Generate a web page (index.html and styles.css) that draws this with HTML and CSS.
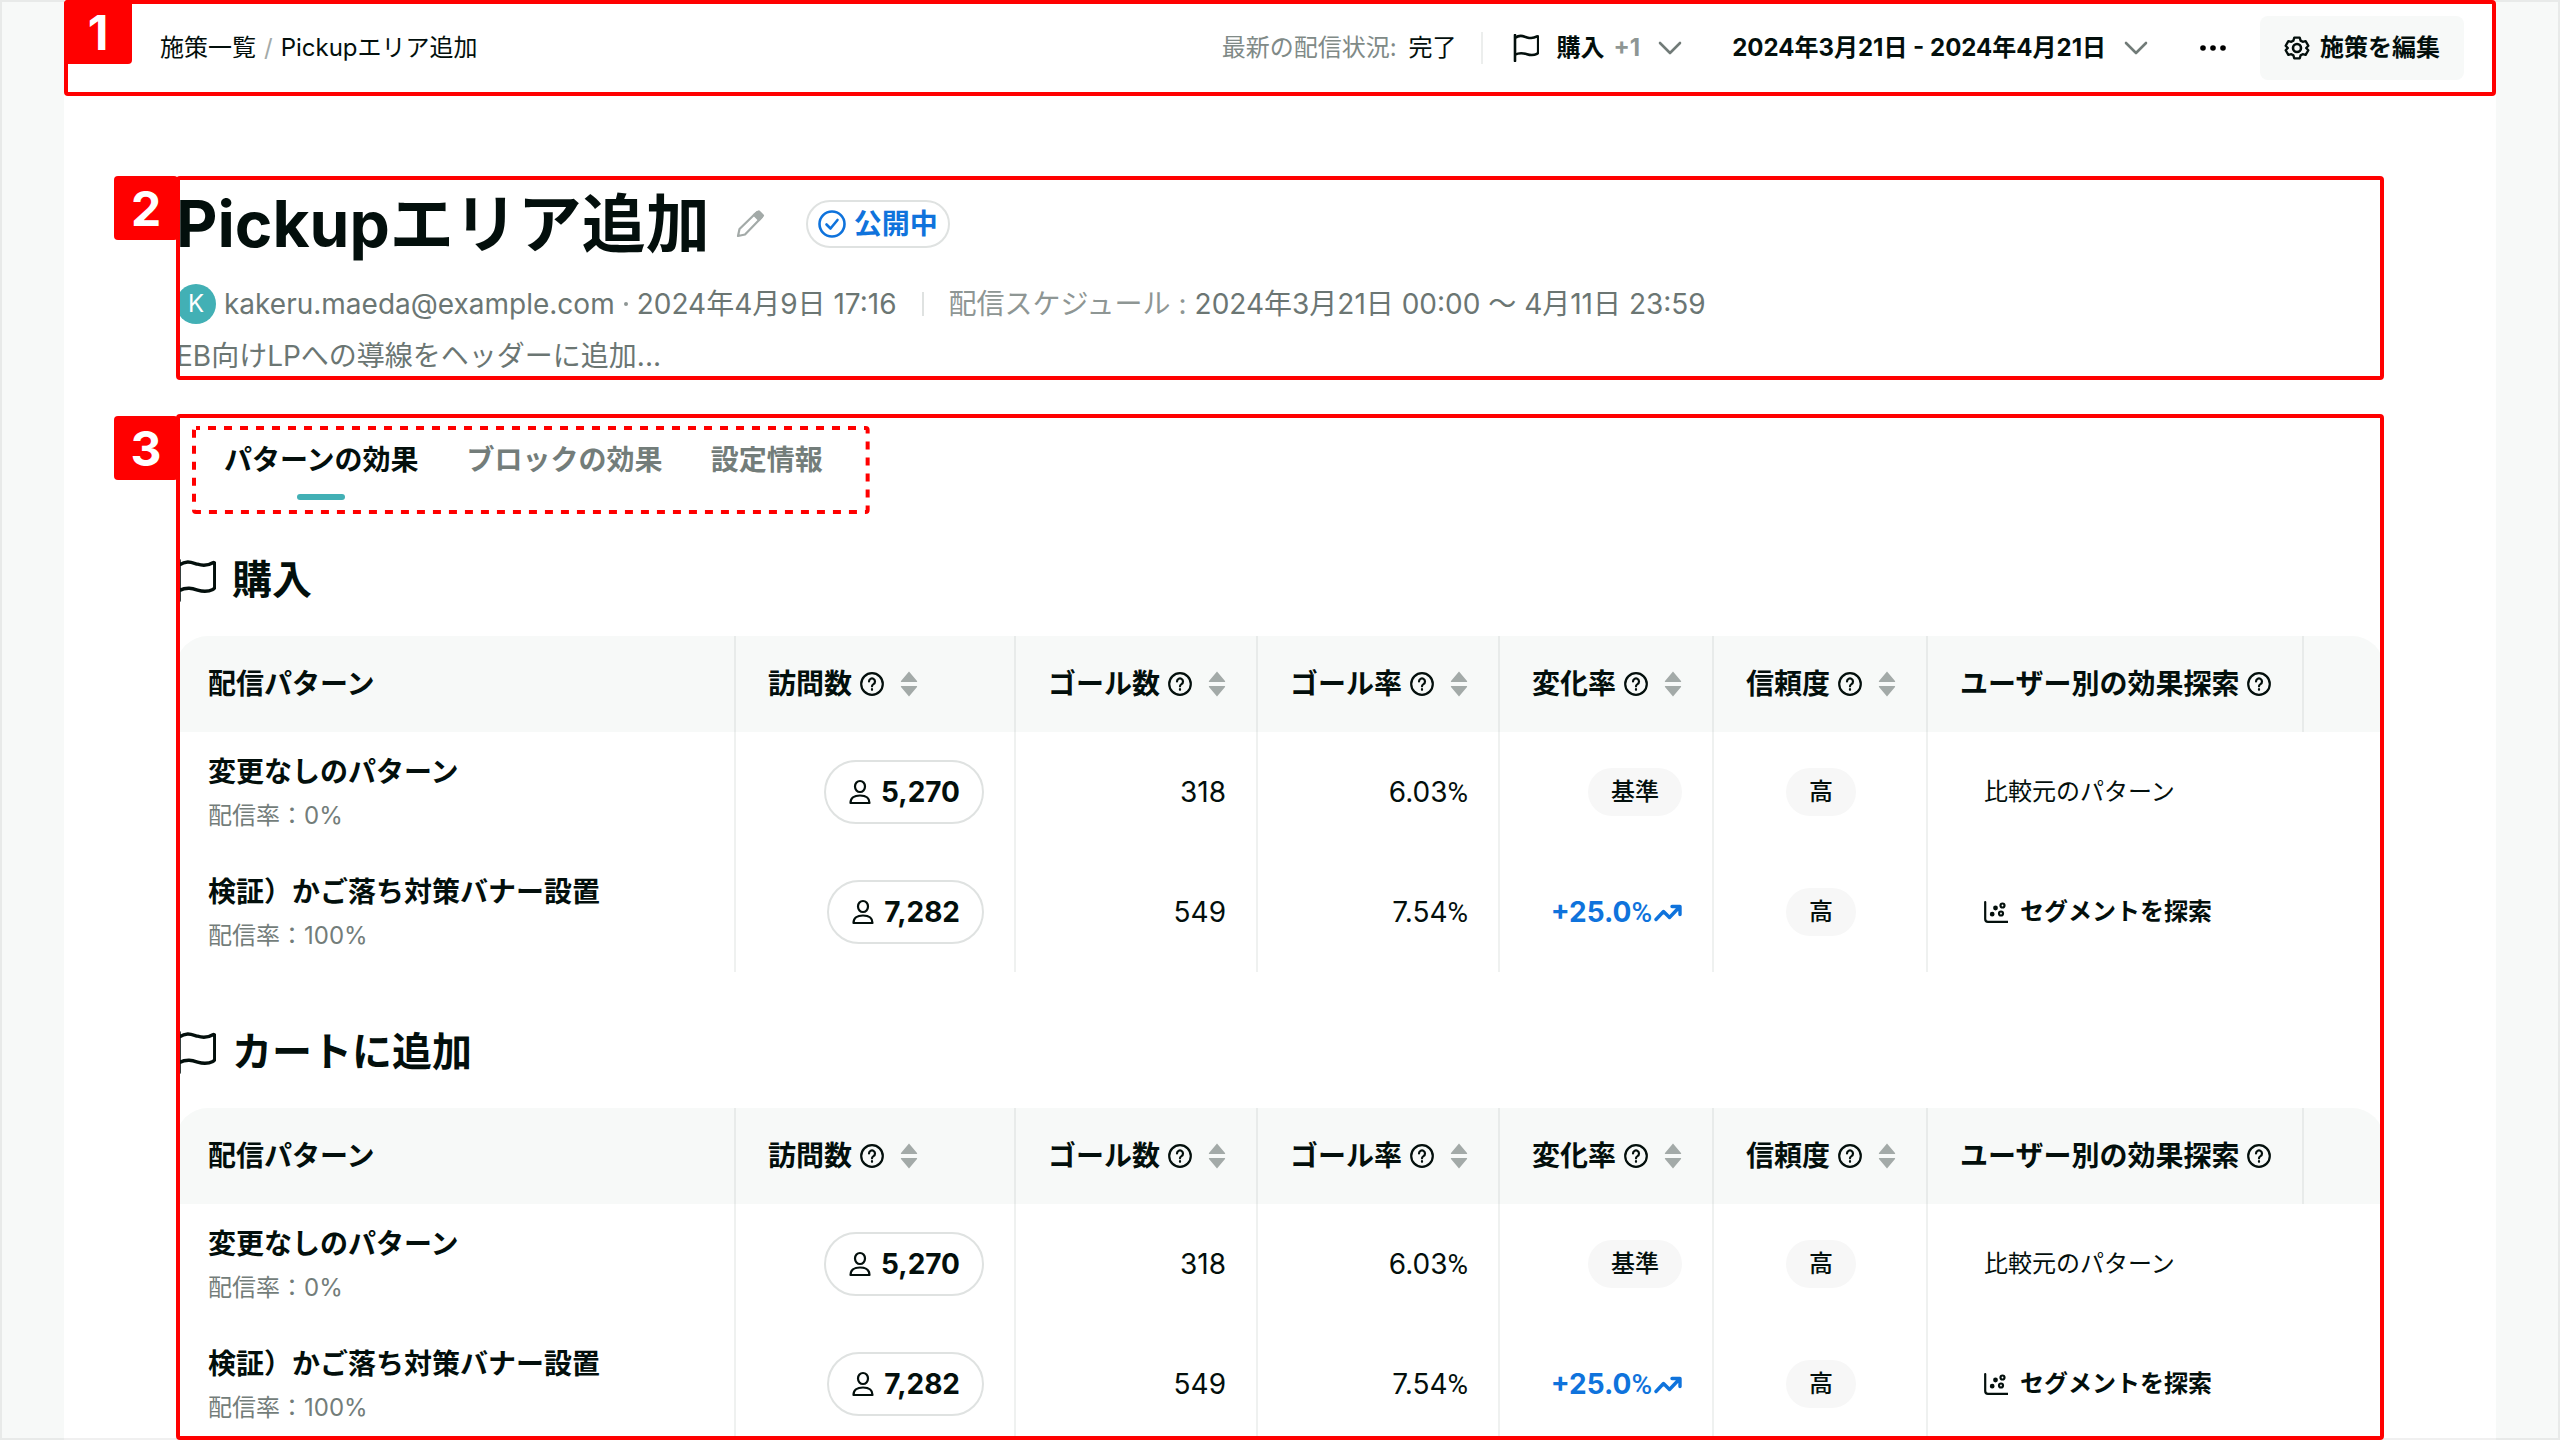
FILE: index.html
```html
<!DOCTYPE html>
<html lang="ja">
<head>
<meta charset="utf-8">
<title>Pickupエリア追加</title>
<link rel="stylesheet" href="styles.css">
</head>
<body>
<svg class="sprite" aria-hidden="true">
  <symbol id="flag" viewBox="0 0 26 28"><path d="M2 1v26M2 4c5-3.500 8-1.800 12-.6s7 .8 10-1a.8.8 0 0 1 1.200.8v14.800c0 .8-.5 1.500-1.200 1.800-3 1.500-6.500 1.500-10 .4s-7-2-12 .4"/></symbol>
  <symbol id="chevron" viewBox="0 0 24 14"><path d="M2 2l10 10L22 2"/></symbol>
  <symbol id="help" viewBox="0 0 24 24"><circle cx="12" cy="12" r="10.800"/><path d="M9 9.500a3 3 0 1 1 4.500 2.600c-1 .6-1.500 1-1.500 2.200"/><path d="M12 17.200v.6"/></symbol>
  <symbol id="sort" viewBox="0 0 18 26"><path d="M9 .5l8 9.500a.6.6 0 0 1-.5 1h-15a.6.6 0 0 1-.5-1zM9 25.500L1 16a.6.6 0 0 1 .5-1h15a.6.6 0 0 1 .5 1z"/></symbol>
  <symbol id="user" viewBox="0 0 24 26"><ellipse cx="12" cy="7.500" rx="5" ry="5.500"/><path d="M2.500 24c0-5 3.500-7.500 9.500-7.500s9.500 2.500 9.500 7.500z"/></symbol>
  <symbol id="trend" viewBox="0 0 28 18"><path d="M2 15.500l7.500-8 6 6L25.500 3M18 2.500h8v8"/></symbol>
  <symbol id="scatter" viewBox="0 0 24 24"><path d="M1.200 2v17a2.800 2.800 0 0 0 2.800 2.800h20"/><circle cx="18.500" cy="5.500" r="2"/><circle cx="17" cy="13.500" r="2"/><circle class="dot" cx="11.500" cy="8" r="1.300"/><circle class="dot" cx="8.200" cy="14.200" r="1.300"/></symbol>
</svg>
<div class="app">
<div class="sheet">
  <header class="callout topbar">
    <span class="badge">1</span>
    <nav class="crumbs"><a href="#">施策一覧</a><span class="slash">/</span><a href="#">Pickupエリア追加</a></nav>
    <div class="tools">
      <span class="status">最新の配信状況:</span><span class="state">完了</span>
      <button class="goal" type="button"><svg class="line flag"><use href="#flag"/></svg>購入<span class="more">+1</span><svg class="line chevron"><use href="#chevron"/></svg></button>
      <button class="range" type="button">2024年3月21日 - 2024年4月21日<svg class="line chevron"><use href="#chevron"/></svg></button>
      <button class="dots" type="button" aria-label="その他"><svg viewBox="0 0 26 6"><circle cx="3" cy="3" r="2.800"/><circle cx="13" cy="3" r="2.800"/><circle cx="23" cy="3" r="2.800"/></svg></button>
      <button class="edit" type="button"><svg class="line gear" viewBox="0 0 26 26"><path d="M10 1.500h6l1 3.300 2.300 1.300 3.300-.8 3 5.200-2.400 2.500 2.400 2.500-3 5.200-3.300-.8-2.300 1.300-1 3.300h-6l-1-3.300-2.300-1.300-3.300.8-3-5.200L2.800 13 .4 10.500l3-5.200 3.300.8L9 4.800z" transform="translate(1.300 1.300) scale(.9)"/><circle cx="13" cy="13" r="4"/></svg>施策を編集</button>
    </div>
  </header>

  <main class="main">
    <section class="callout summary">
      <span class="badge">2</span>
      <div class="title-row">
        <h1>Pickupエリア追加</h1>
        <button class="pencil" type="button" aria-label="名前を編集"><svg class="line" viewBox="0 0 28 28"><path d="M2 26l1.500-7L20.500 2.500a2 2 0 0 1 3 0l2 2a2 2 0 0 1 0 3L9 24.500z"/><path class="tip" d="M18 5l5-3.500 4 4-4 4.500z"/></svg></button>
        <span class="live"><svg class="line" viewBox="0 0 28 28"><circle cx="14" cy="14" r="12.500"/><path d="M8.500 14.500l4 4 7-8.500"/></svg>公開中</span>
      </div>
      <div class="meta">
        <span class="avatar">K</span><span class="mail">kakeru.maeda@example.com</span><span class="sep"></span><span>2024年4月9日 17:16</span><span class="bar"></span><span class="label">配信スケジュール :</span><span class="term">2024年3月21日 00:00 〜 4月11日 23:59</span>
      </div>
      <p class="desc">EB向けLPへの導線をヘッダーに追加...</p>
    </section>

    <section class="callout report">
      <span class="badge">3</span>
      <div class="tabs" role="tablist">
        <svg class="dashes" aria-hidden="true"><rect x="2" y="2" rx="2"/></svg>
        <button class="tab current" role="tab" aria-selected="true">パターンの効果</button>
        <button class="tab" role="tab" aria-selected="false">ブロックの効果</button>
        <button class="tab" role="tab" aria-selected="false">設定情報</button>
      </div>

      <h2><svg class="line"><use href="#flag"/></svg>購入</h2>
      <table>
        <colgroup><col class="c-name"><col class="c-visit"><col class="c-goal"><col class="c-goal"><col class="c-rate"><col class="c-rate"><col class="c-find"><col></colgroup>
        <thead><tr>
          <th>配信パターン</th>
          <th><div class="th">訪問数<svg class="line help"><use href="#help"/></svg><svg class="sort"><use href="#sort"/></svg></div></th>
          <th><div class="th">ゴール数<svg class="line help"><use href="#help"/></svg><svg class="sort"><use href="#sort"/></svg></div></th>
          <th><div class="th">ゴール率<svg class="line help"><use href="#help"/></svg><svg class="sort"><use href="#sort"/></svg></div></th>
          <th><div class="th">変化率<svg class="line help"><use href="#help"/></svg><svg class="sort"><use href="#sort"/></svg></div></th>
          <th><div class="th">信頼度<svg class="line help"><use href="#help"/></svg><svg class="sort"><use href="#sort"/></svg></div></th>
          <th><div class="th">ユーザー別の効果探索<svg class="line help"><use href="#help"/></svg></div></th>
          <th></th>
        </tr></thead>
        <tbody>
          <tr>
            <td><div class="name">変更なしのパターン</div><div class="share">配信率：0%</div></td>
            <td class="num"><button class="visits" type="button"><svg class="line"><use href="#user"/></svg>5,270</button></td>
            <td class="num">318</td><td class="num">6.03<span class="pct">%</span></td>
            <td class="num"><span class="chip">基準</span></td>
            <td class="mid"><span class="chip">高</span></td>
            <td class="find">比較元のパターン</td><td></td>
          </tr>
          <tr>
            <td><div class="name">検証）かご落ち対策バナー設置</div><div class="share">配信率：100%</div></td>
            <td class="num"><button class="visits" type="button"><svg class="line"><use href="#user"/></svg>7,282</button></td>
            <td class="num">549</td><td class="num">7.54<span class="pct">%</span></td>
            <td class="num"><span class="up"><span>+25.0<span class="pct">%</span></span><svg class="line"><use href="#trend"/></svg></span></td>
            <td class="mid"><span class="chip">高</span></td>
            <td class="find"><button class="explore" type="button"><svg class="line"><use href="#scatter"/></svg>セグメントを探索</button></td><td></td>
          </tr>
        </tbody>
      </table>

      <h2><svg class="line"><use href="#flag"/></svg>カートに追加</h2>
      <table>
        <colgroup><col class="c-name"><col class="c-visit"><col class="c-goal"><col class="c-goal"><col class="c-rate"><col class="c-rate"><col class="c-find"><col></colgroup>
        <thead><tr>
          <th>配信パターン</th>
          <th><div class="th">訪問数<svg class="line help"><use href="#help"/></svg><svg class="sort"><use href="#sort"/></svg></div></th>
          <th><div class="th">ゴール数<svg class="line help"><use href="#help"/></svg><svg class="sort"><use href="#sort"/></svg></div></th>
          <th><div class="th">ゴール率<svg class="line help"><use href="#help"/></svg><svg class="sort"><use href="#sort"/></svg></div></th>
          <th><div class="th">変化率<svg class="line help"><use href="#help"/></svg><svg class="sort"><use href="#sort"/></svg></div></th>
          <th><div class="th">信頼度<svg class="line help"><use href="#help"/></svg><svg class="sort"><use href="#sort"/></svg></div></th>
          <th><div class="th">ユーザー別の効果探索<svg class="line help"><use href="#help"/></svg></div></th>
          <th></th>
        </tr></thead>
        <tbody>
          <tr>
            <td><div class="name">変更なしのパターン</div><div class="share">配信率：0%</div></td>
            <td class="num"><button class="visits" type="button"><svg class="line"><use href="#user"/></svg>5,270</button></td>
            <td class="num">318</td><td class="num">6.03<span class="pct">%</span></td>
            <td class="num"><span class="chip">基準</span></td>
            <td class="mid"><span class="chip">高</span></td>
            <td class="find">比較元のパターン</td><td></td>
          </tr>
          <tr>
            <td><div class="name">検証）かご落ち対策バナー設置</div><div class="share">配信率：100%</div></td>
            <td class="num"><button class="visits" type="button"><svg class="line"><use href="#user"/></svg>7,282</button></td>
            <td class="num">549</td><td class="num">7.54<span class="pct">%</span></td>
            <td class="num"><span class="up"><span>+25.0<span class="pct">%</span></span><svg class="line"><use href="#trend"/></svg></span></td>
            <td class="mid"><span class="chip">高</span></td>
            <td class="find"><button class="explore" type="button"><svg class="line"><use href="#scatter"/></svg>セグメントを探索</button></td><td></td>
          </tr>
        </tbody>
      </table>
    </section>
  </main>
</div>
</div>
</body>
</html>
```
FILE: styles.css
```css
* { box-sizing: border-box; margin: 0; }
body {
  font-family: Inter, "Noto Sans CJK JP", sans-serif;
  font-size: 28px;
  line-height: 40px;
  color: #030f0c;
}
button { font: inherit; color: inherit; background: none; border: 0; padding: 0; }
a { color: inherit; text-decoration: none; }
svg { flex: none; overflow: visible; }
.sprite { display: none; }
.line { fill: none; stroke: currentColor; stroke-width: 2.2; stroke-linecap: round; stroke-linejoin: round; }

.app { position: relative; height: 100vh; overflow: hidden; padding: 0 64px; background: #f7f9f8; }
.app::after { content: ""; position: absolute; inset: 0; border: 2px solid rgb(0 0 0 / 6%); pointer-events: none; }
.sheet { display: flex; flex-direction: column; height: 100%; background: #fff; }

/* numbered red frames */
.callout { position: relative; }
.callout::after { content: ""; position: absolute; z-index: 1; inset: 0; border: 4px solid #f00; border-radius: 4px; pointer-events: none; }
.badge {
  position: absolute; z-index: 1; top: 0; right: 100%;
  width: 64px; height: 64px; margin-right: -2px; border-radius: 4px;
  background: #f00; color: #fff; font-size: 48px; font-weight: 700; line-height: 66px; text-align: center;
}
.topbar .badge { right: auto; left: 0; width: 68px; margin: 0; }
.report .badge { top: 2px; }

.topbar { flex: none; display: flex; align-items: center; justify-content: space-between; height: 96px; padding: 0 32px 0 96px; font-size: 24px; }
.crumbs { display: flex; gap: 8px; }
.slash { color: #a3aaa8; }
.tools { display: flex; align-items: center; }
.status { color: #808a87; }
.state { margin-left: 12px; padding-right: 24px; }
.goal, .range, .edit { display: flex; align-items: center; font-weight: 700; }
.goal { height: 32px; padding-left: 30px; border-left: 2px solid #eceeed; }
.flag { width: 26px; height: 28px; margin-right: 18px; stroke-width: 2.6; }
.more { margin-left: 9px; color: #8e9694; }
.chevron { width: 24px; height: 14px; margin-left: 18px; color: #717b78; stroke-width: 2.6; }
.range { margin-left: 50px; }
.dots { display: flex; margin: 0 34px 0 52px; }
.dots svg { width: 26px; height: 6px; }
.edit { gap: 10px; height: 64px; padding: 0 24px; border-radius: 8px; background: #f7f9f8; }
.gear { width: 26px; height: 26px; stroke-width: 2.6; }

.main { flex: 1; min-height: 0; display: flex; flex-direction: column; gap: 34px; padding: 80px 112px 0; }
.summary { flex: none; height: 204px; padding-top: 8px; }
.title-row { display: flex; align-items: center; height: 80px; }
h1 { font-size: 64px; line-height: 80px; font-weight: 700; }
.pencil { display: flex; margin: 0 42px 0 26px; color: #a3aaa8; }
.pencil svg { width: 28px; height: 28px; }
.tip { fill: currentColor; }
.live { display: flex; align-items: center; gap: 8px; height: 48px; padding: 0 10px; border: 2px solid #dfe2e1; border-radius: 24px; color: #0f73dc; font-weight: 700; }
.live svg { width: 28px; height: 28px; stroke-width: 2.6; }
.meta { display: flex; align-items: center; height: 40px; margin-top: 20px; color: #6b7673; }
.avatar { width: 40px; height: 40px; margin-right: 8px; border-radius: 50%; background: #42b0b5; color: #fff; font-size: 24px; text-align: center; }
.sep { width: 4px; height: 4px; margin: 0 9px; border-radius: 50%; background: #8e9694; }
.bar { width: 2px; height: 24px; margin: 0 25px; background: #dfe2e1; }
.label { margin-right: 8px; color: #8e9694; }
.desc { margin-top: 12px; color: #6b7673; }

.report { flex: 1; min-height: 0; padding-top: 12px; }
.tabs { position: relative; display: flex; gap: 48px; width: fit-content; height: 88px; margin-left: 16px; padding: 14px 47px 0 32px; }
.dashes { position: absolute; inset: 0; width: 100%; height: 100%; fill: none; stroke: #f00; stroke-width: 4; stroke-dasharray: 8; stroke-dashoffset: 4; pointer-events: none; }
.dashes rect { width: calc(100% - 4px); height: calc(100% - 4px); }
.tab { position: relative; height: 64px; padding-bottom: 26px; color: #737d7a; font-weight: 700; }
.current { color: #030f0c; }
.current::after { content: ""; position: absolute; left: 50%; bottom: 4px; width: 48px; height: 6px; margin-left: -24px; border-radius: 3px; background: #42b0b5; }
h2 { display: flex; align-items: center; gap: 16px; height: 56px; margin: 38px 0 28px; font-size: 40px; font-weight: 700; }
h2 svg { width: 40px; height: 43px; stroke-width: 2.6; }
table + h2 { margin-top: 52px; }

table { width: 100%; table-layout: fixed; border-collapse: separate; border-spacing: 0; }
.c-name { width: 560px; }
.c-visit { width: 280px; }
.c-goal { width: 242px; }
.c-rate { width: 214px; }
.c-find { width: 376px; }
th, td { padding: 0 30px 0 32px; border-right: 2px solid #eff1f0; text-align: left; }
th { height: 96px; background: #f7f9f8; border-color: #e8ebea; font-weight: 700; white-space: nowrap; }
th:first-child { border-top-left-radius: 32px; }
th:last-child { border-top-right-radius: 32px; border-right: 0; }
td { height: 120px; }
td:first-child { padding-top: 4px; }
td:nth-last-child(-n+2) { border-right-color: transparent; }
.th { display: flex; align-items: center; }
.help { width: 24px; height: 24px; margin-left: 8px; }
.sort { width: 18px; height: 26px; margin-left: 16px; fill: #a3aaa8; }
.name { font-weight: 700; }
.share { margin-top: 4px; font-size: 24px; color: #737d7a; }
.num { text-align: right; }
.mid { text-align: center; }
.pct { font-family: Roboto, sans-serif; }
.visits { display: inline-flex; align-items: center; gap: 9px; height: 64px; padding: 0 22px; border: 2px solid #dfe2e1; border-radius: 32px; font-weight: 700; vertical-align: middle; }
.visits svg { width: 24px; height: 26px; }
.chip { display: inline-block; height: 48px; padding: 0 23px; border-radius: 24px; background: #f7f7f7; font-size: 24px; font-weight: 500; line-height: 48px; vertical-align: middle; }
.up { display: inline-flex; align-items: center; gap: 2px; color: #0f73dc; font-weight: 700; vertical-align: middle; }
.up .pct { font-weight: 500; }
.up svg { width: 28px; height: 18px; stroke-width: 3.4; }
.find { padding-left: 56px; font-size: 24px; }
.explore { display: flex; align-items: center; gap: 12px; font-weight: 700; }
.explore svg { width: 24px; height: 24px; }
.dot { fill: currentColor; }
```
